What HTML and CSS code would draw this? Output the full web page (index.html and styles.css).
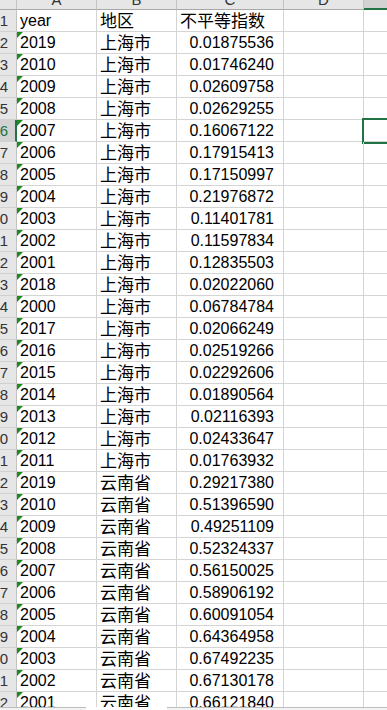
FILE: index.html
```html
<!DOCTYPE html>
<html lang="zh">
<head>
<meta charset="utf-8">
<link rel="stylesheet" href="styles.css">
</head>
<body>
<div class="sheet">
  <div class="row hdr">
    <div class="cell rh corner"></div>
    <div class="cell a"><span>A</span></div>
    <div class="cell b"><span>B</span></div>
    <div class="cell c"><span>C</span></div>
    <div class="cell d"><span>D</span></div>
    <div class="cell e cur"></div>
  </div>
  <div class="row"><div class="cell rh"><span>1</span></div><div class="cell a">year</div><div class="cell b">地区</div><div class="cell c txt">不平等指数</div><div class="cell d"></div><div class="cell e"></div></div>
  <div class="row"><div class="cell rh"><span>2</span></div><div class="cell a t">2019</div><div class="cell b">上海市</div><div class="cell c">0.01875536</div><div class="cell d"></div><div class="cell e"></div></div>
  <div class="row"><div class="cell rh"><span>3</span></div><div class="cell a t">2010</div><div class="cell b">上海市</div><div class="cell c">0.01746240</div><div class="cell d"></div><div class="cell e"></div></div>
  <div class="row"><div class="cell rh"><span>4</span></div><div class="cell a t">2009</div><div class="cell b">上海市</div><div class="cell c">0.02609758</div><div class="cell d"></div><div class="cell e"></div></div>
  <div class="row"><div class="cell rh"><span>5</span></div><div class="cell a t">2008</div><div class="cell b">上海市</div><div class="cell c">0.02629255</div><div class="cell d"></div><div class="cell e"></div></div>
  <div class="row"><div class="cell rh cur"><span>6</span></div><div class="cell a t">2007</div><div class="cell b">上海市</div><div class="cell c">0.16067122</div><div class="cell d"></div><div class="cell e sel"></div></div>
  <div class="row"><div class="cell rh"><span>7</span></div><div class="cell a t">2006</div><div class="cell b">上海市</div><div class="cell c">0.17915413</div><div class="cell d"></div><div class="cell e"></div></div>
  <div class="row"><div class="cell rh"><span>8</span></div><div class="cell a t">2005</div><div class="cell b">上海市</div><div class="cell c">0.17150997</div><div class="cell d"></div><div class="cell e"></div></div>
  <div class="row"><div class="cell rh"><span>9</span></div><div class="cell a t">2004</div><div class="cell b">上海市</div><div class="cell c">0.21976872</div><div class="cell d"></div><div class="cell e"></div></div>
  <div class="row"><div class="cell rh"><span>10</span></div><div class="cell a t">2003</div><div class="cell b">上海市</div><div class="cell c">0.11401781</div><div class="cell d"></div><div class="cell e"></div></div>
  <div class="row"><div class="cell rh"><span>11</span></div><div class="cell a t">2002</div><div class="cell b">上海市</div><div class="cell c">0.11597834</div><div class="cell d"></div><div class="cell e"></div></div>
  <div class="row"><div class="cell rh"><span>12</span></div><div class="cell a t">2001</div><div class="cell b">上海市</div><div class="cell c">0.12835503</div><div class="cell d"></div><div class="cell e"></div></div>
  <div class="row"><div class="cell rh"><span>13</span></div><div class="cell a t">2018</div><div class="cell b">上海市</div><div class="cell c">0.02022060</div><div class="cell d"></div><div class="cell e"></div></div>
  <div class="row"><div class="cell rh"><span>14</span></div><div class="cell a t">2000</div><div class="cell b">上海市</div><div class="cell c">0.06784784</div><div class="cell d"></div><div class="cell e"></div></div>
  <div class="row"><div class="cell rh"><span>15</span></div><div class="cell a t">2017</div><div class="cell b">上海市</div><div class="cell c">0.02066249</div><div class="cell d"></div><div class="cell e"></div></div>
  <div class="row"><div class="cell rh"><span>16</span></div><div class="cell a t">2016</div><div class="cell b">上海市</div><div class="cell c">0.02519266</div><div class="cell d"></div><div class="cell e"></div></div>
  <div class="row"><div class="cell rh"><span>17</span></div><div class="cell a t">2015</div><div class="cell b">上海市</div><div class="cell c">0.02292606</div><div class="cell d"></div><div class="cell e"></div></div>
  <div class="row"><div class="cell rh"><span>18</span></div><div class="cell a t">2014</div><div class="cell b">上海市</div><div class="cell c">0.01890564</div><div class="cell d"></div><div class="cell e"></div></div>
  <div class="row"><div class="cell rh"><span>19</span></div><div class="cell a t">2013</div><div class="cell b">上海市</div><div class="cell c">0.02116393</div><div class="cell d"></div><div class="cell e"></div></div>
  <div class="row"><div class="cell rh"><span>20</span></div><div class="cell a t">2012</div><div class="cell b">上海市</div><div class="cell c">0.02433647</div><div class="cell d"></div><div class="cell e"></div></div>
  <div class="row"><div class="cell rh"><span>21</span></div><div class="cell a t">2011</div><div class="cell b">上海市</div><div class="cell c">0.01763932</div><div class="cell d"></div><div class="cell e"></div></div>
  <div class="row"><div class="cell rh"><span>22</span></div><div class="cell a t">2019</div><div class="cell b">云南省</div><div class="cell c">0.29217380</div><div class="cell d"></div><div class="cell e"></div></div>
  <div class="row"><div class="cell rh"><span>23</span></div><div class="cell a t">2010</div><div class="cell b">云南省</div><div class="cell c">0.51396590</div><div class="cell d"></div><div class="cell e"></div></div>
  <div class="row"><div class="cell rh"><span>24</span></div><div class="cell a t">2009</div><div class="cell b">云南省</div><div class="cell c">0.49251109</div><div class="cell d"></div><div class="cell e"></div></div>
  <div class="row"><div class="cell rh"><span>25</span></div><div class="cell a t">2008</div><div class="cell b">云南省</div><div class="cell c">0.52324337</div><div class="cell d"></div><div class="cell e"></div></div>
  <div class="row"><div class="cell rh"><span>26</span></div><div class="cell a t">2007</div><div class="cell b">云南省</div><div class="cell c">0.56150025</div><div class="cell d"></div><div class="cell e"></div></div>
  <div class="row"><div class="cell rh"><span>27</span></div><div class="cell a t">2006</div><div class="cell b">云南省</div><div class="cell c">0.58906192</div><div class="cell d"></div><div class="cell e"></div></div>
  <div class="row"><div class="cell rh"><span>28</span></div><div class="cell a t">2005</div><div class="cell b">云南省</div><div class="cell c">0.60091054</div><div class="cell d"></div><div class="cell e"></div></div>
  <div class="row"><div class="cell rh"><span>29</span></div><div class="cell a t">2004</div><div class="cell b">云南省</div><div class="cell c">0.64364958</div><div class="cell d"></div><div class="cell e"></div></div>
  <div class="row"><div class="cell rh"><span>30</span></div><div class="cell a t">2003</div><div class="cell b">云南省</div><div class="cell c">0.67492235</div><div class="cell d"></div><div class="cell e"></div></div>
  <div class="row"><div class="cell rh"><span>31</span></div><div class="cell a t">2002</div><div class="cell b">云南省</div><div class="cell c">0.67130178</div><div class="cell d"></div><div class="cell e"></div></div>
  <div class="row"><div class="cell rh"><span>32</span></div><div class="cell a t">2001</div><div class="cell b">云南省</div><div class="cell c">0.66121840</div><div class="cell d"></div><div class="cell e"></div></div>
</div>
<div class="bottombar">
  <div class="seg left"></div>
  <div class="seg gap"></div>
  <div class="seg right"></div>
</div>
</body>
</html>
```
FILE: styles.css
```css
html, body {
  margin: 0;
  padding: 0;
  background: #fff;
  overflow: hidden;
}
body {
  font-family: "Liberation Sans", Arial, "Noto Sans CJK SC", sans-serif;
  color: #000;
  height: 710px;
  display: flex;
  flex-direction: column;
}
.sheet {
  height: 707px;
  overflow: hidden;
  flex: none;
}
.row {
  display: flex;
  height: 22px;
}
.cell {
  box-sizing: border-box;
  flex: none;
  height: 22px;
  border-right: 1px solid #d4d4d4;
  border-bottom: 1px solid #d4d4d4;
  font-size: 16px;
  line-height: 21px;
  white-space: nowrap;
  overflow: hidden;
}
.rh {
  width: 17px;
  background: #e6e6e6;
  border-right-color: #c2c2c2;
  border-bottom-color: #d0d0d0;
  display: flex;
  justify-content: flex-end;
  padding-right: 8px;
  font-size: 15px;
  color: #333;
}
.rh span { flex: none; }
.rh.cur {
  background: #d2d2d2;
  color: #217346;
  border-right: 2px solid #217346;
  padding-right: 7px;
}
.a {
  width: 80px;
  padding-left: 3px;
  position: relative;
}
.b {
  width: 80px;
  padding-left: 3px;
  font-family: "Noto Sans CJK SC", sans-serif;
  font-size: 17px;
  line-height: 17px;
  padding-top: 1px;
}
.c {
  width: 107px;
  text-align: right;
  padding-right: 9px;
}
.c.txt {
  text-align: left;
  padding: 1px 0 0 3px;
  font-family: "Noto Sans CJK SC", sans-serif;
  font-size: 17px;
  line-height: 17px;
}
.d {
  width: 80px;
}
.e {
  flex: 1 0 auto;
  border-right: none;
}
.e.sel {
  outline: 2px solid #217346;
  overflow: visible;
}
.t::before {
  content: "";
  position: absolute;
  left: 0;
  top: 0;
  border-top: 6px solid #1e8a1e;
  border-right: 6px solid transparent;
}

/* column header row */
.hdr {
  height: 10px;
}
.hdr .cell {
  height: 10px;
  background: #e6e6e6;
  border-right-color: #c2c2c2;
  border-bottom: 1px solid #a8a8a8;
  display: flex;
  justify-content: center;
  align-items: flex-end;
  padding: 0 0 2px 0;
  font-family: "Liberation Sans", Arial, sans-serif;
  font-size: 15px;
  line-height: 15px;
  color: #333;
  overflow: hidden;
}
.hdr .cell span { flex: none; }
.hdr .corner {
  background: #e6e6e6;
}
.hdr .cur {
  background: #d2d2d2;
  border-bottom: 2px solid #217346;
  padding-bottom: 1px;
}

/* bottom bar */
.bottombar {
  flex: 1;
  display: flex;
}
.seg { box-sizing: border-box; }
.seg.left {
  width: 86px;
  background: #f3f3f3;
  border-top: 1px solid #bdbdbd;
}
.seg.gap {
  width: 81px;
  background: #fff;
}
.seg.right {
  flex: 1;
  background: #f3f3f3;
  border-top: 1px solid #bdbdbd;
}
```
